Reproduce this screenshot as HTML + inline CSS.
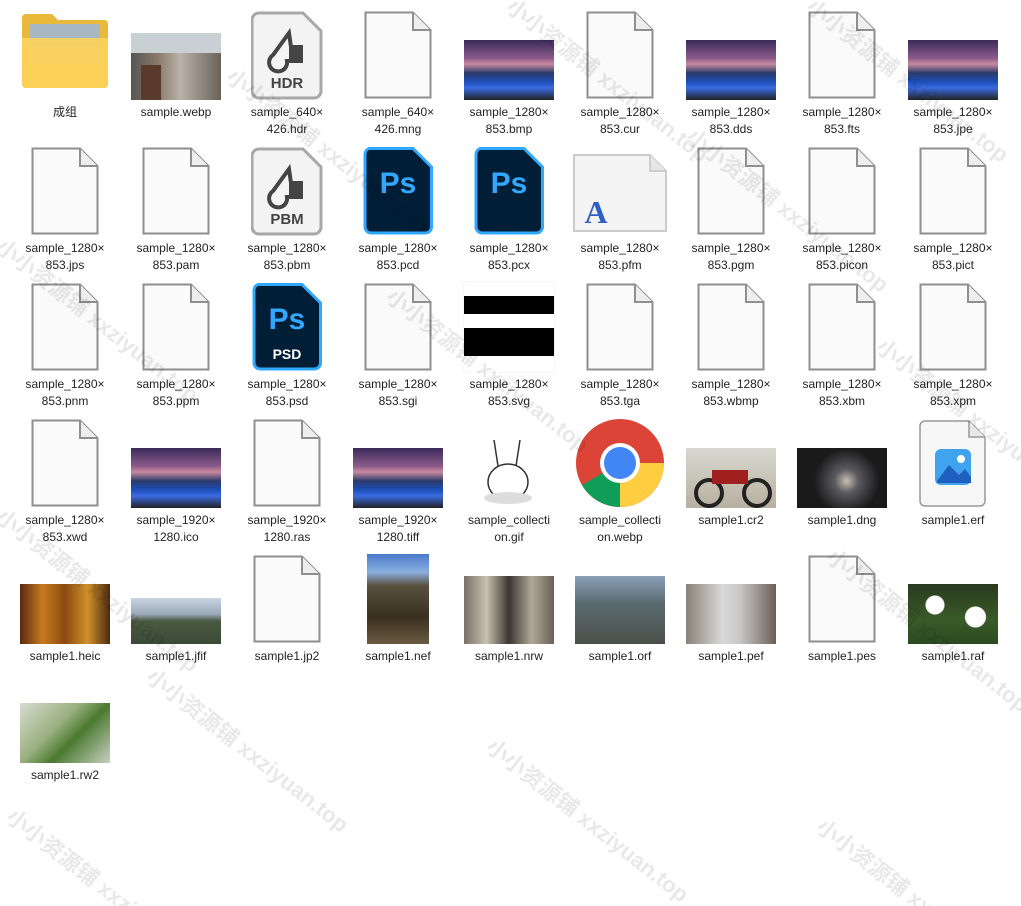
<!DOCTYPE html>
<html><head><meta charset="utf-8">
<style>
html,body{margin:0;padding:0;background:#fff;width:1021px;height:906px;overflow:hidden;position:relative;font-family:"Liberation Sans","Noto Sans CJK SC",sans-serif}
.c{position:absolute;width:110px;display:flex;flex-direction:column;align-items:center}
.ic{height:100px;width:110px;display:flex;align-items:flex-end;justify-content:center}
.l{margin-top:4px;font-size:12px;line-height:17px;color:#222;text-align:center;white-space:nowrap}
.doc{width:68px;height:88px;margin-bottom:1px}
.ls{width:90px;height:60px;background:linear-gradient(#3a2b5a 0%,#8a5a8a 30%,#c98aa0 40%,#2a3a6a 55%,#1d4fb8 70%,#3a6ae0 80%,#222 100%)}
.ps{width:70px;height:88px;margin-bottom:1px}
.wm{position:absolute;color:rgba(0,0,0,0.09);font-size:22px;font-weight:bold;transform:rotate(38deg);white-space:nowrap;transform-origin:left top;pointer-events:none}
</style></head><body>
<svg width="0" height="0" style="position:absolute"><defs>
<g id="d"><path d="M1.5 1.5H49L66.5 19V86.5H1.5Z" fill="#fafafa" stroke="#8f8f8f" stroke-width="2"/><path d="M49 1.5V19H66.5" fill="#eee" stroke="#8f8f8f" stroke-width="2"/></g>
<g id="p"><path d="M6 1.5H50L68.5 20V80a6 6 0 0 1-6 6H8a6 6 0 0 1-6-6V7a6 6 0 0 1 4-5.5Z" fill="#001e36" stroke="#31a8ff" stroke-width="3"/></g>
<g id="g"><path d="M8 2H52L70 20V80a7 7 0 0 1-7 7H8a7 7 0 0 1-7-7V9a7 7 0 0 1 7-7Z" fill="#f3f3f3" stroke="#a8a8a8" stroke-width="3"/><path d="M38 22L22 44a9 9 0 1 0 14 6h14V36H40Z" fill="none" stroke="#444" stroke-width="4"/><rect x="38" y="36" width="14" height="14" fill="#444"/></g>
</defs></svg>

<!-- Row 0 -->
<div class="c" style="left:10px;top:0"><div class="ic"><svg width="90" height="76" style="margin-bottom:12px"><path d="M2 6a4 4 0 0 1 4-4h26l6 6h46a4 4 0 0 1 4 4v60a4 4 0 0 1-4 4H6a4 4 0 0 1-4-4Z" fill="#e8b93a"/><rect x="10" y="12" width="70" height="40" fill="#a9b7c4"/><rect x="10" y="34" width="70" height="18" fill="#d2c19a"/><path d="M2 26h86v46a4 4 0 0 1-4 4H6a4 4 0 0 1-4-4Z" fill="#fcd35a" opacity=".9"/></svg></div><div class="l">成组</div></div>
<div class="c" style="left:121px;top:0"><div class="ic"><div style="width:90px;height:67px;background:linear-gradient(90deg,#555 0%,#8a7a6a 30%,#b9b2a8 55%,#6a6258 100%);position:relative"><div style="position:absolute;left:0;top:0;width:90px;height:20px;background:#c9d0d4"></div><div style="position:absolute;left:10px;top:32px;width:20px;height:35px;background:#5a3a2a"></div></div></div><div class="l">sample.webp</div></div>
<div class="c" style="left:232px;top:0"><div class="ic"><svg width="72" height="89"><use href="#g"/><text x="36" y="77" text-anchor="middle" font-size="15" font-weight="bold" fill="#444" font-family="Liberation Sans">HDR</text></svg></div><div class="l">sample_640×<br>426.hdr</div></div>
<div class="c" style="left:343px;top:0"><div class="ic"><svg class="doc"><use href="#d"/></svg></div><div class="l">sample_640×<br>426.mng</div></div>
<div class="c" style="left:454px;top:0"><div class="ic"><div class="ls"></div></div><div class="l">sample_1280×<br>853.bmp</div></div>
<div class="c" style="left:565px;top:0"><div class="ic"><svg class="doc"><use href="#d"/></svg></div><div class="l">sample_1280×<br>853.cur</div></div>
<div class="c" style="left:676px;top:0"><div class="ic"><div class="ls"></div></div><div class="l">sample_1280×<br>853.dds</div></div>
<div class="c" style="left:787px;top:0"><div class="ic"><svg class="doc"><use href="#d"/></svg></div><div class="l">sample_1280×<br>853.fts</div></div>
<div class="c" style="left:898px;top:0"><div class="ic"><div class="ls"></div></div><div class="l">sample_1280×<br>853.jpe</div></div>

<!-- Row 1 -->
<div class="c" style="left:10px;top:136px"><div class="ic"><svg class="doc"><use href="#d"/></svg></div><div class="l">sample_1280×<br>853.jps</div></div>
<div class="c" style="left:121px;top:136px"><div class="ic"><svg class="doc"><use href="#d"/></svg></div><div class="l">sample_1280×<br>853.pam</div></div>
<div class="c" style="left:232px;top:136px"><div class="ic"><svg width="72" height="89"><use href="#g"/><text x="36" y="77" text-anchor="middle" font-size="15" font-weight="bold" fill="#444" font-family="Liberation Sans">PBM</text></svg></div><div class="l">sample_1280×<br>853.pbm</div></div>
<div class="c" style="left:343px;top:136px"><div class="ic"><svg class="ps"><use href="#p"/><text x="35" y="46" text-anchor="middle" font-size="30" font-weight="bold" fill="#31a8ff" font-family="Liberation Sans">Ps</text></svg></div><div class="l">sample_1280×<br>853.pcd</div></div>
<div class="c" style="left:454px;top:136px"><div class="ic"><svg class="ps"><use href="#p"/><text x="35" y="46" text-anchor="middle" font-size="30" font-weight="bold" fill="#31a8ff" font-family="Liberation Sans">Ps</text></svg></div><div class="l">sample_1280×<br>853.pcx</div></div>
<div class="c" style="left:565px;top:136px"><div class="ic"><svg width="96" height="80" style="margin-bottom:3px"><path d="M2 2H78L94 18V78H2Z" fill="#f4f4f4" stroke="#ccc" stroke-width="2"/><path d="M78 2V18H94" fill="#e6e6e6" stroke="#ccc" stroke-width="2"/><text x="24" y="70" text-anchor="middle" font-size="32" font-weight="bold" fill="#2f5fc6" font-family="Liberation Serif">A</text></svg></div><div class="l">sample_1280×<br>853.pfm</div></div>
<div class="c" style="left:676px;top:136px"><div class="ic"><svg class="doc"><use href="#d"/></svg></div><div class="l">sample_1280×<br>853.pgm</div></div>
<div class="c" style="left:787px;top:136px"><div class="ic"><svg class="doc"><use href="#d"/></svg></div><div class="l">sample_1280×<br>853.picon</div></div>
<div class="c" style="left:898px;top:136px"><div class="ic"><svg class="doc"><use href="#d"/></svg></div><div class="l">sample_1280×<br>853.pict</div></div>

<!-- Row 2 -->
<div class="c" style="left:10px;top:272px"><div class="ic"><svg class="doc"><use href="#d"/></svg></div><div class="l">sample_1280×<br>853.pnm</div></div>
<div class="c" style="left:121px;top:272px"><div class="ic"><svg class="doc"><use href="#d"/></svg></div><div class="l">sample_1280×<br>853.ppm</div></div>
<div class="c" style="left:232px;top:272px"><div class="ic"><svg class="ps"><use href="#p"/><text x="35" y="46" text-anchor="middle" font-size="30" font-weight="bold" fill="#31a8ff" font-family="Liberation Sans">Ps</text><text x="35" y="76" text-anchor="middle" font-size="14" font-weight="bold" fill="#fff" font-family="Liberation Sans">PSD</text></svg></div><div class="l">sample_1280×<br>853.psd</div></div>
<div class="c" style="left:343px;top:272px"><div class="ic"><svg class="doc"><use href="#d"/></svg></div><div class="l">sample_1280×<br>853.sgi</div></div>
<div class="c" style="left:454px;top:272px"><div class="ic"><div style="width:90px;height:90px;background:#fff;position:relative;box-shadow:0 0 1px #ccc"><div style="position:absolute;left:0;top:14px;width:90px;height:18px;background:#000"></div><div style="position:absolute;left:0;top:46px;width:90px;height:28px;background:#000"></div></div></div><div class="l">sample_1280×<br>853.svg</div></div>
<div class="c" style="left:565px;top:272px"><div class="ic"><svg class="doc"><use href="#d"/></svg></div><div class="l">sample_1280×<br>853.tga</div></div>
<div class="c" style="left:676px;top:272px"><div class="ic"><svg class="doc"><use href="#d"/></svg></div><div class="l">sample_1280×<br>853.wbmp</div></div>
<div class="c" style="left:787px;top:272px"><div class="ic"><svg class="doc"><use href="#d"/></svg></div><div class="l">sample_1280×<br>853.xbm</div></div>
<div class="c" style="left:898px;top:272px"><div class="ic"><svg class="doc"><use href="#d"/></svg></div><div class="l">sample_1280×<br>853.xpm</div></div>

<!-- Row 3 -->
<div class="c" style="left:10px;top:408px"><div class="ic"><svg class="doc"><use href="#d"/></svg></div><div class="l">sample_1280×<br>853.xwd</div></div>
<div class="c" style="left:121px;top:408px"><div class="ic"><div class="ls"></div></div><div class="l">sample_1920×<br>1280.ico</div></div>
<div class="c" style="left:232px;top:408px"><div class="ic"><svg class="doc"><use href="#d"/></svg></div><div class="l">sample_1920×<br>1280.ras</div></div>
<div class="c" style="left:343px;top:408px"><div class="ic"><div class="ls"></div></div><div class="l">sample_1920×<br>1280.tiff</div></div>
<div class="c" style="left:454px;top:408px"><div class="ic"><svg width="90" height="74"><rect width="90" height="74" fill="#fff"/><ellipse cx="44" cy="48" rx="20" ry="18" fill="#fff" stroke="#333" stroke-width="1.5"/><path d="M34 32L30 6M52 32L56 6" stroke="#333" stroke-width="1.5" fill="none"/><ellipse cx="44" cy="64" rx="24" ry="6" fill="#ddd"/></svg></div><div class="l">sample_collecti<br>on.gif</div></div>
<div class="c" style="left:565px;top:408px"><div class="ic"><svg width="90" height="90"><circle cx="45" cy="45" r="44" fill="#db4437"/><path d="M45 45H89A44 44 0 0 1 45 89Z" fill="#ffcd40"/><path d="M45 45L45 89A44 44 0 0 1 7 67Z" fill="#0f9d58"/><circle cx="45" cy="45" r="20" fill="#fff"/><circle cx="45" cy="45" r="16" fill="#4285f4"/></svg></div><div class="l">sample_collecti<br>on.webp</div></div>
<div class="c" style="left:676px;top:408px"><div class="ic"><div style="width:90px;height:60px;background:linear-gradient(#d8d8d0,#b8b0a0);position:relative"><div style="position:absolute;left:8px;top:30px;width:22px;height:22px;border:4px solid #222;border-radius:50%"></div><div style="position:absolute;left:56px;top:30px;width:22px;height:22px;border:4px solid #222;border-radius:50%"></div><div style="position:absolute;left:26px;top:22px;width:36px;height:14px;background:#a02020"></div></div></div><div class="l">sample1.cr2</div></div>
<div class="c" style="left:787px;top:408px"><div class="ic"><div style="width:90px;height:60px;background:radial-gradient(circle at 55% 55%,#c8c0b0 0,#5a5a60 20%,#1a1a1a 55%)"></div></div><div class="l">sample1.dng</div></div>
<div class="c" style="left:898px;top:408px"><div class="ic"><svg width="68" height="89"><path d="M6 2H50L66 18V82a5 5 0 0 1-5 5H6a5 5 0 0 1-5-5V7a5 5 0 0 1 5-5Z" fill="#f7f7f7" stroke="#999" stroke-width="1.5"/><path d="M50 2V18H66" fill="#e8e8e8" stroke="#999" stroke-width="1.5"/><rect x="16" y="30" width="36" height="36" rx="6" fill="#3fa3ef"/><path d="M18 62L30 46L40 56L46 50L52 58V64H18Z" fill="#1e5fbf"/><circle cx="42" cy="40" r="4" fill="#fff"/></svg></div><div class="l">sample1.erf</div></div>

<!-- Row 4 -->
<div class="c" style="left:10px;top:544px"><div class="ic"><div style="width:90px;height:60px;background:linear-gradient(90deg,#5a2a10,#c87a20,#8a4a10,#d0902a,#4a2a10)"></div></div><div class="l">sample1.heic</div></div>
<div class="c" style="left:121px;top:544px"><div class="ic"><div style="width:90px;height:46px;background:linear-gradient(#c8d4e0 0%,#9aa8b8 35%,#4a5a40 50%,#3a4a38 100%)"></div></div><div class="l">sample1.jfif</div></div>
<div class="c" style="left:232px;top:544px"><div class="ic"><svg class="doc"><use href="#d"/></svg></div><div class="l">sample1.jp2</div></div>
<div class="c" style="left:343px;top:544px"><div class="ic"><div style="width:62px;height:90px;background:linear-gradient(#4a7ac8 0%,#8ab0e0 20%,#5a5040 35%,#3a3020 70%,#6a5a40 100%)"></div></div><div class="l">sample1.nef</div></div>
<div class="c" style="left:454px;top:544px"><div class="ic"><div style="width:90px;height:68px;background:linear-gradient(90deg,#7a7068,#c8c0b0,#3a3530,#b0a898,#6a6058)"></div></div><div class="l">sample1.nrw</div></div>
<div class="c" style="left:565px;top:544px"><div class="ic"><div style="width:90px;height:68px;background:linear-gradient(#8aa0b8,#5a6a70 40%,#4a5048 100%)"></div></div><div class="l">sample1.orf</div></div>
<div class="c" style="left:676px;top:544px"><div class="ic"><div style="width:90px;height:60px;background:linear-gradient(90deg,#8a8078,#d8d8d8 40%,#c8c8c8 60%,#6a6058)"></div></div><div class="l">sample1.pef</div></div>
<div class="c" style="left:787px;top:544px"><div class="ic"><svg class="doc"><use href="#d"/></svg></div><div class="l">sample1.pes</div></div>
<div class="c" style="left:898px;top:544px"><div class="ic"><div style="width:90px;height:60px;background:radial-gradient(circle at 30% 35%,#fff 0 9px,transparent 10px),radial-gradient(circle at 75% 55%,#fff 0 10px,transparent 11px),linear-gradient(#2a3a20,#3a5a28 60%,#2a4a20)"></div></div><div class="l">sample1.raf</div></div>

<!-- Row 5 -->
<div class="c" style="left:10px;top:663px"><div class="ic"><div style="width:90px;height:60px;background:linear-gradient(135deg,#d8dcd0 0%,#9ab080 40%,#4a7a30 60%,#c8d0c0 100%)"></div></div><div class="l">sample1.rw2</div></div>

<!-- watermarks -->
<div class="wm" style="left:520px;top:-10px">小小资源铺 xxziyuan.top</div>
<div class="wm" style="left:820px;top:-10px">小小资源铺 xxziyuan.top</div>
<div class="wm" style="left:240px;top:60px">小小资源铺 xxziyuan.top</div>
<div class="wm" style="left:700px;top:120px">小小资源铺 xxziyuan.top</div>
<div class="wm" style="left:10px;top:230px">小小资源铺 xxziyuan.top</div>
<div class="wm" style="left:400px;top:280px">小小资源铺 xxziyuan.top</div>
<div class="wm" style="left:890px;top:330px">小小资源铺 xxziyuan.top</div>
<div class="wm" style="left:10px;top:500px">小小资源铺 xxziyuan.top</div>
<div class="wm" style="left:160px;top:660px">小小资源铺 xxziyuan.top</div>
<div class="wm" style="left:500px;top:730px">小小资源铺 xxziyuan.top</div>
<div class="wm" style="left:840px;top:540px">小小资源铺 xxziyuan.top</div>
<div class="wm" style="left:20px;top:800px">小小资源铺 xxziyuan.top</div>
<div class="wm" style="left:830px;top:810px">小小资源铺 xxziyuan.top</div>
</body></html>
